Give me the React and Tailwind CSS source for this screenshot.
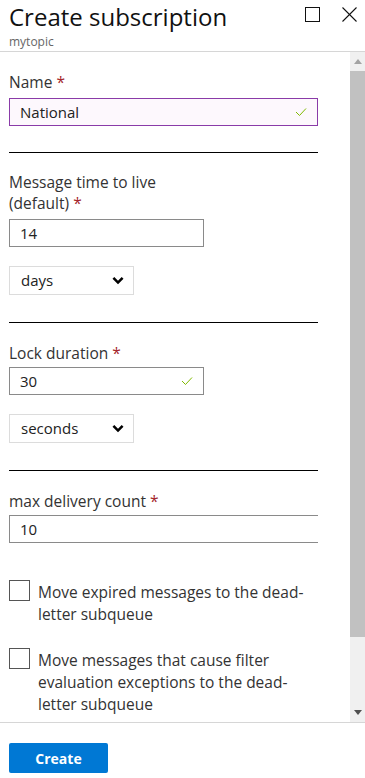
import React from "react";

function Check() {
  return (
    <svg width="12" height="10" viewBox="0 0 12 10" fill="none" stroke="#7fba00" strokeWidth="1">
      <polyline points="1,5 4.5,8.5 11,1.5" />
    </svg>
  );
}

function Chevron() {
  return (
    <svg width="12" height="8" viewBox="0 0 12 8" fill="#000">
      <path d="M0.5 1.8 L2.3 0 L6 3.7 L9.7 0 L11.5 1.8 L6 7.3 Z" />
    </svg>
  );
}

function Label({ children }) {
  return (
    <div className="text-[15.5px] leading-[20px] text-[#333]">
      {children} <span className="text-[#a4262c]">*</span>
    </div>
  );
}

function TextBox({ value, width, valid, active, noRight }) {
  return (
    <div
      className={`flex items-center h-[28px] px-[10px] text-[15px] text-[#222] border ${
        active ? "border-[#8a3ba8] bg-[#fdf8fd]" : "border-[#8a8a8a] bg-white"
      } ${noRight ? "border-r-0" : ""} ${width}`}
    >
      <span className="flex-1">{value}</span>
      {valid && <Check />}
    </div>
  );
}

function Select({ value }) {
  return (
    <div className="flex items-center justify-between w-[125px] h-[29px] pl-[11px] pr-[9px] border border-[#dcdcdc] text-[15px] text-[#222]">
      <span>{value}</span>
      <Chevron />
    </div>
  );
}

function Divider() {
  return <div className="w-[309px] h-px bg-black" />;
}

function CheckRow({ children }) {
  return (
    <div className="flex items-start gap-[8px]">
      <div className="w-[21px] h-[21px] border border-[#555] bg-white shrink-0 -mt-[1px]" />
      <div className="w-[281px] text-[15.5px] leading-[22px] text-[#333]">{children}</div>
    </div>
  );
}

export default function App() {
  return (
    <div
      className="w-[365px] h-[778px] flex flex-col bg-white overflow-hidden"
      style={{ fontFamily: '"Open Sans", "Noto Sans", sans-serif' }}
    >
      <div className="h-[52px] border-b border-[#d6d6d6] flex justify-between pl-[9px] pr-[8px] shrink-0">
        <div>
          <div className="text-[24px] leading-[33px] text-[#111]">Create subscription</div>
          <div className="text-[12px] leading-[15px] mt-[0.5px] text-[#666]">mytopic</div>
        </div>
        <div className="flex items-start gap-[22px] pt-[7px]">
          <div className="w-[15px] h-[15px] border border-[#111]" />
          <svg width="15" height="15" viewBox="0 0 15 15" stroke="#111" strokeWidth="1.1">
            <line x1="0.5" y1="0.5" x2="14.5" y2="14.5" />
            <line x1="14.5" y1="0.5" x2="0.5" y2="14.5" />
          </svg>
        </div>
      </div>

      <div className="flex-1 flex min-h-0">
        <div className="flex-1 pl-[9px] pt-[20px]">
          <Label>Name</Label>
          <div className="mt-[6px]">
            <TextBox value="National" width="w-[309px]" valid active />
          </div>
          <div className="mt-[26px]"><Divider /></div>

          <div className="mt-[19px] text-[15.5px] leading-[21px] text-[#333]">Message time to live</div>
          <div className="text-[15.5px] leading-[21px] text-[#333]">
            (default) <span className="text-[#a4262c]">*</span>
          </div>
          <div className="mt-[5px]">
            <TextBox value="14" width="w-[195px]" />
          </div>
          <div className="mt-[19px]"><Select value="days" /></div>
          <div className="mt-[27px]"><Divider /></div>

          <div className="mt-[20px]"><Label>Lock duration</Label></div>
          <div className="mt-[4px]">
            <TextBox value="30" width="w-[195px]" valid />
          </div>
          <div className="mt-[19px]"><Select value="seconds" /></div>
          <div className="mt-[27px]"><Divider /></div>

          <div className="mt-[20px]"><Label>max delivery count</Label></div>
          <div className="mt-[4px]">
            <TextBox value="10" width="w-[309px]" noRight />
          </div>

          <div className="mt-[38px]">
            <CheckRow>Move expired messages to the dead-letter subqueue</CheckRow>
          </div>
          <div className="mt-[24px]">
            <CheckRow>Move messages that cause filter evaluation exceptions to the dead-letter subqueue</CheckRow>
          </div>
        </div>

        <div className="w-[15px] bg-[#f0f0f0] flex flex-col items-center shrink-0">
          <div className="h-[19px] flex items-center justify-center">
            <svg width="8" height="5" viewBox="0 0 8 5" fill="#a3a3a3"><path d="M0 5 L4 0 L8 5 Z" /></svg>
          </div>
          <div className="w-[15px] h-[566px] bg-[#c1c1c1]" />
          <div className="flex-1" />
          <div className="h-[19px] flex items-center justify-center">
            <svg width="8" height="5" viewBox="0 0 8 5" fill="#505050"><path d="M0 0 L8 0 L4 5 Z" /></svg>
          </div>
        </div>
      </div>

      <div className="h-[56px] border-t border-[#d6d6d6] shrink-0 pl-[9px] pt-[20px]">
        <button className="w-[99px] h-[30px] bg-[#0078d4] rounded-[2px] text-white text-[14px] font-bold">
          Create
        </button>
      </div>
    </div>
  );
}
